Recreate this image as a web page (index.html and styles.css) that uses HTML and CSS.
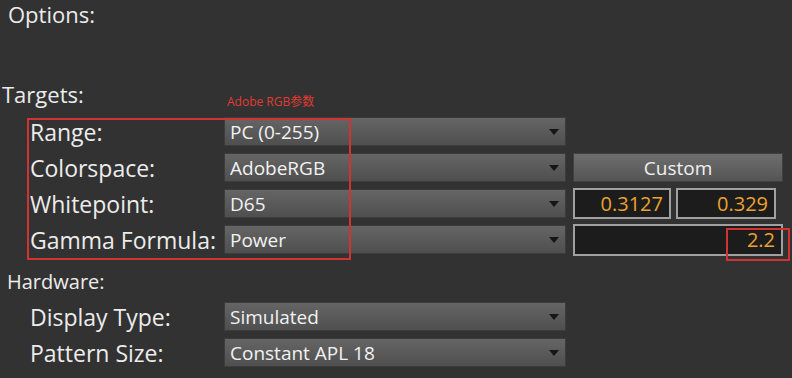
FILE: index.html
```html
<!DOCTYPE html>
<html lang="en">

<head>
    <meta charset="UTF-8">
    <meta name="viewport" content="width=device-width, initial-scale=1.0">
    <title>Options</title>
    <link rel="stylesheet" href="styles.css">
</head>

<body>
    <div class="page">
        <p class="title options">Options:</p>

        <p class="title targets">Targets:</p>
        <span class="note">Adobe RGB参数</span>

        <div class="grid">
            <div class="label">Range:</div>
            <div class="select">PC (0-255)<i class="arrow"></i></div>
            <div></div>

            <div class="label">Colorspace:</div>
            <div class="select">AdobeRGB<i class="arrow"></i></div>
            <button class="btn">Custom</button>

            <div class="label">Whitepoint:</div>
            <div class="select">D65<i class="arrow"></i></div>
            <div class="pair">
                <div class="num small">0.3127</div>
                <div class="num small">0.329</div>
            </div>

            <div class="label">Gamma Formula:</div>
            <div class="select">Power<i class="arrow"></i></div>
            <div class="num wide">2.2</div>
        </div>

        <p class="sub">Hardware:</p>

        <div class="grid hw">
            <div class="label">Display Type:</div>
            <div class="select">Simulated<i class="arrow"></i></div>
            <div></div>

            <div class="label">Pattern Size:</div>
            <div class="select">Constant APL 18<i class="arrow"></i></div>
            <div></div>
        </div>

        <!-- annotation boxes -->
        <div class="mark mark-left"></div>
        <div class="mark mark-gamma"></div>
    </div>
</body>

</html>
```

FILE: styles.css
```css
* {
    margin: 0;
    padding: 0;
    box-sizing: border-box;
}

body {
    font-family: "Open Sans", "Noto Sans CJK SC", sans-serif;
    color: #ececec;
    background-color: #323232;
}

.page {
    position: relative;
    width: 792px;
    height: 378px;
    overflow: hidden;
}

.title {
    font-size: 22px;
    line-height: 28px;
}

.options {
    padding-left: 8px;
}

.targets {
    margin-top: 52px;
    padding-left: 2px;
}

.note {
    position: absolute;
    left: 227px;
    top: 94px;
    font-size: 12px;
    line-height: 16px;
    color: #e23a32;
}

.grid {
    display: grid;
    grid-template-columns: 187px 342px 210px;
    grid-auto-rows: 29px;
    column-gap: 7px;
    row-gap: 7px;
    margin-top: 9px;
    margin-left: 30px;
}

.label {
    font-size: 23px;
    line-height: 29px;
    padding-top: 1px;
    white-space: nowrap;
}

.select {
    position: relative;
    height: 29px;
    padding: 1px 0 0 5px;
    font-size: 19px;
    line-height: 26px;
    color: #f2f2f2;
    background: linear-gradient(#656565, #4f4f4f);
    border: 1px solid #3c3c3c;
}

.arrow {
    position: absolute;
    right: 6px;
    top: 11px;
    border-left: 5px solid transparent;
    border-right: 5px solid transparent;
    border-top: 6px solid #161616;
}

.btn {
    height: 29px;
    font-family: inherit;
    font-size: 19px;
    color: #f0f0f0;
    background: linear-gradient(#6e6e6e, #555);
    border: 1px solid #404040;
}

.pair {
    display: flex;
    gap: 5px;
}

.num {
    height: 31px;
    margin-top: -1px;
    padding-right: 6px;
    font-size: 20px;
    line-height: 27px;
    text-align: right;
    color: #eba22f;
    background-color: #1c1c1c;
    border: 2px solid #a0a0a0;
}

.small {
    width: 98px;
}

.pair .small:last-child {
    width: 100px;
}

.wide {
    height: 32px;
}

.sub {
    margin-top: 15px;
    padding-left: 7px;
    font-size: 20px;
    line-height: 26px;
}

.hw {
    margin-top: 7px;
}

.mark {
    position: absolute;
    border: 2px solid #d23232;
}

.mark-left {
    left: 27px;
    top: 118px;
    width: 324px;
    height: 142px;
}

.mark-gamma {
    left: 726px;
    top: 228px;
    width: 64px;
    height: 33px;
}
```
